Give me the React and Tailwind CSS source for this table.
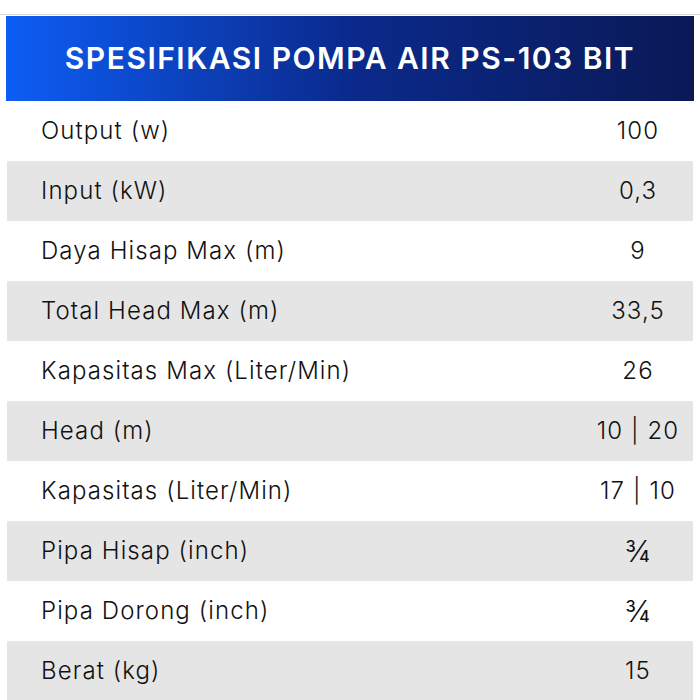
const SPECS = [
  ['Output (w)', '100'],
  ['Input (kW)', '0,3'],
  ['Daya Hisap Max (m)', '9'],
  ['Total Head Max (m)', '33,5'],
  ['Kapasitas Max (Liter/Min)', '26'],
  ['Head (m)', '10 | 20'],
  ['Kapasitas (Liter/Min)', '17 | 10'],
  ['Pipa Hisap (inch)', '¾'],
  ['Pipa Dorong (inch)', '¾'],
  ['Berat (kg)', '15'],
];

export default function App() {
  return (
    <div className="w-[700px] h-[700px] overflow-hidden bg-white pt-[14px]" style={{ fontFamily: 'Inter, "Noto Sans", sans-serif' }}>
      <div className="border-t border-[#d8d8de]">
        <div className="mx-[6px] mt-[1px] h-[85px] flex items-center justify-center bg-linear-to-r from-[#0c5ef6] via-[#0a2a8c] via-50% to-[#0a1956]">
          <h1 className="text-white text-[30px] font-semibold tracking-[1.5px]">SPESIFIKASI POMPA AIR PS-103 BIT</h1>
        </div>
        <div className="mx-[7px]">
          {SPECS.map(([label, value], i) => (
            <div
              key={label}
              className={`h-[60px] flex items-center text-[24px] font-light tracking-[1.1px] text-[#111] ${i % 2 ? 'bg-[#e5e5e5]' : 'bg-white'}`}
            >
              <span className="pl-[34px] flex-1">{label}</span>
              <span className={`w-[100px] mr-[5px] text-center ${value === '¾' ? 'text-[30px]' : ''}`}>{value}</span>
            </div>
          ))}
        </div>
      </div>
    </div>
  );
}
